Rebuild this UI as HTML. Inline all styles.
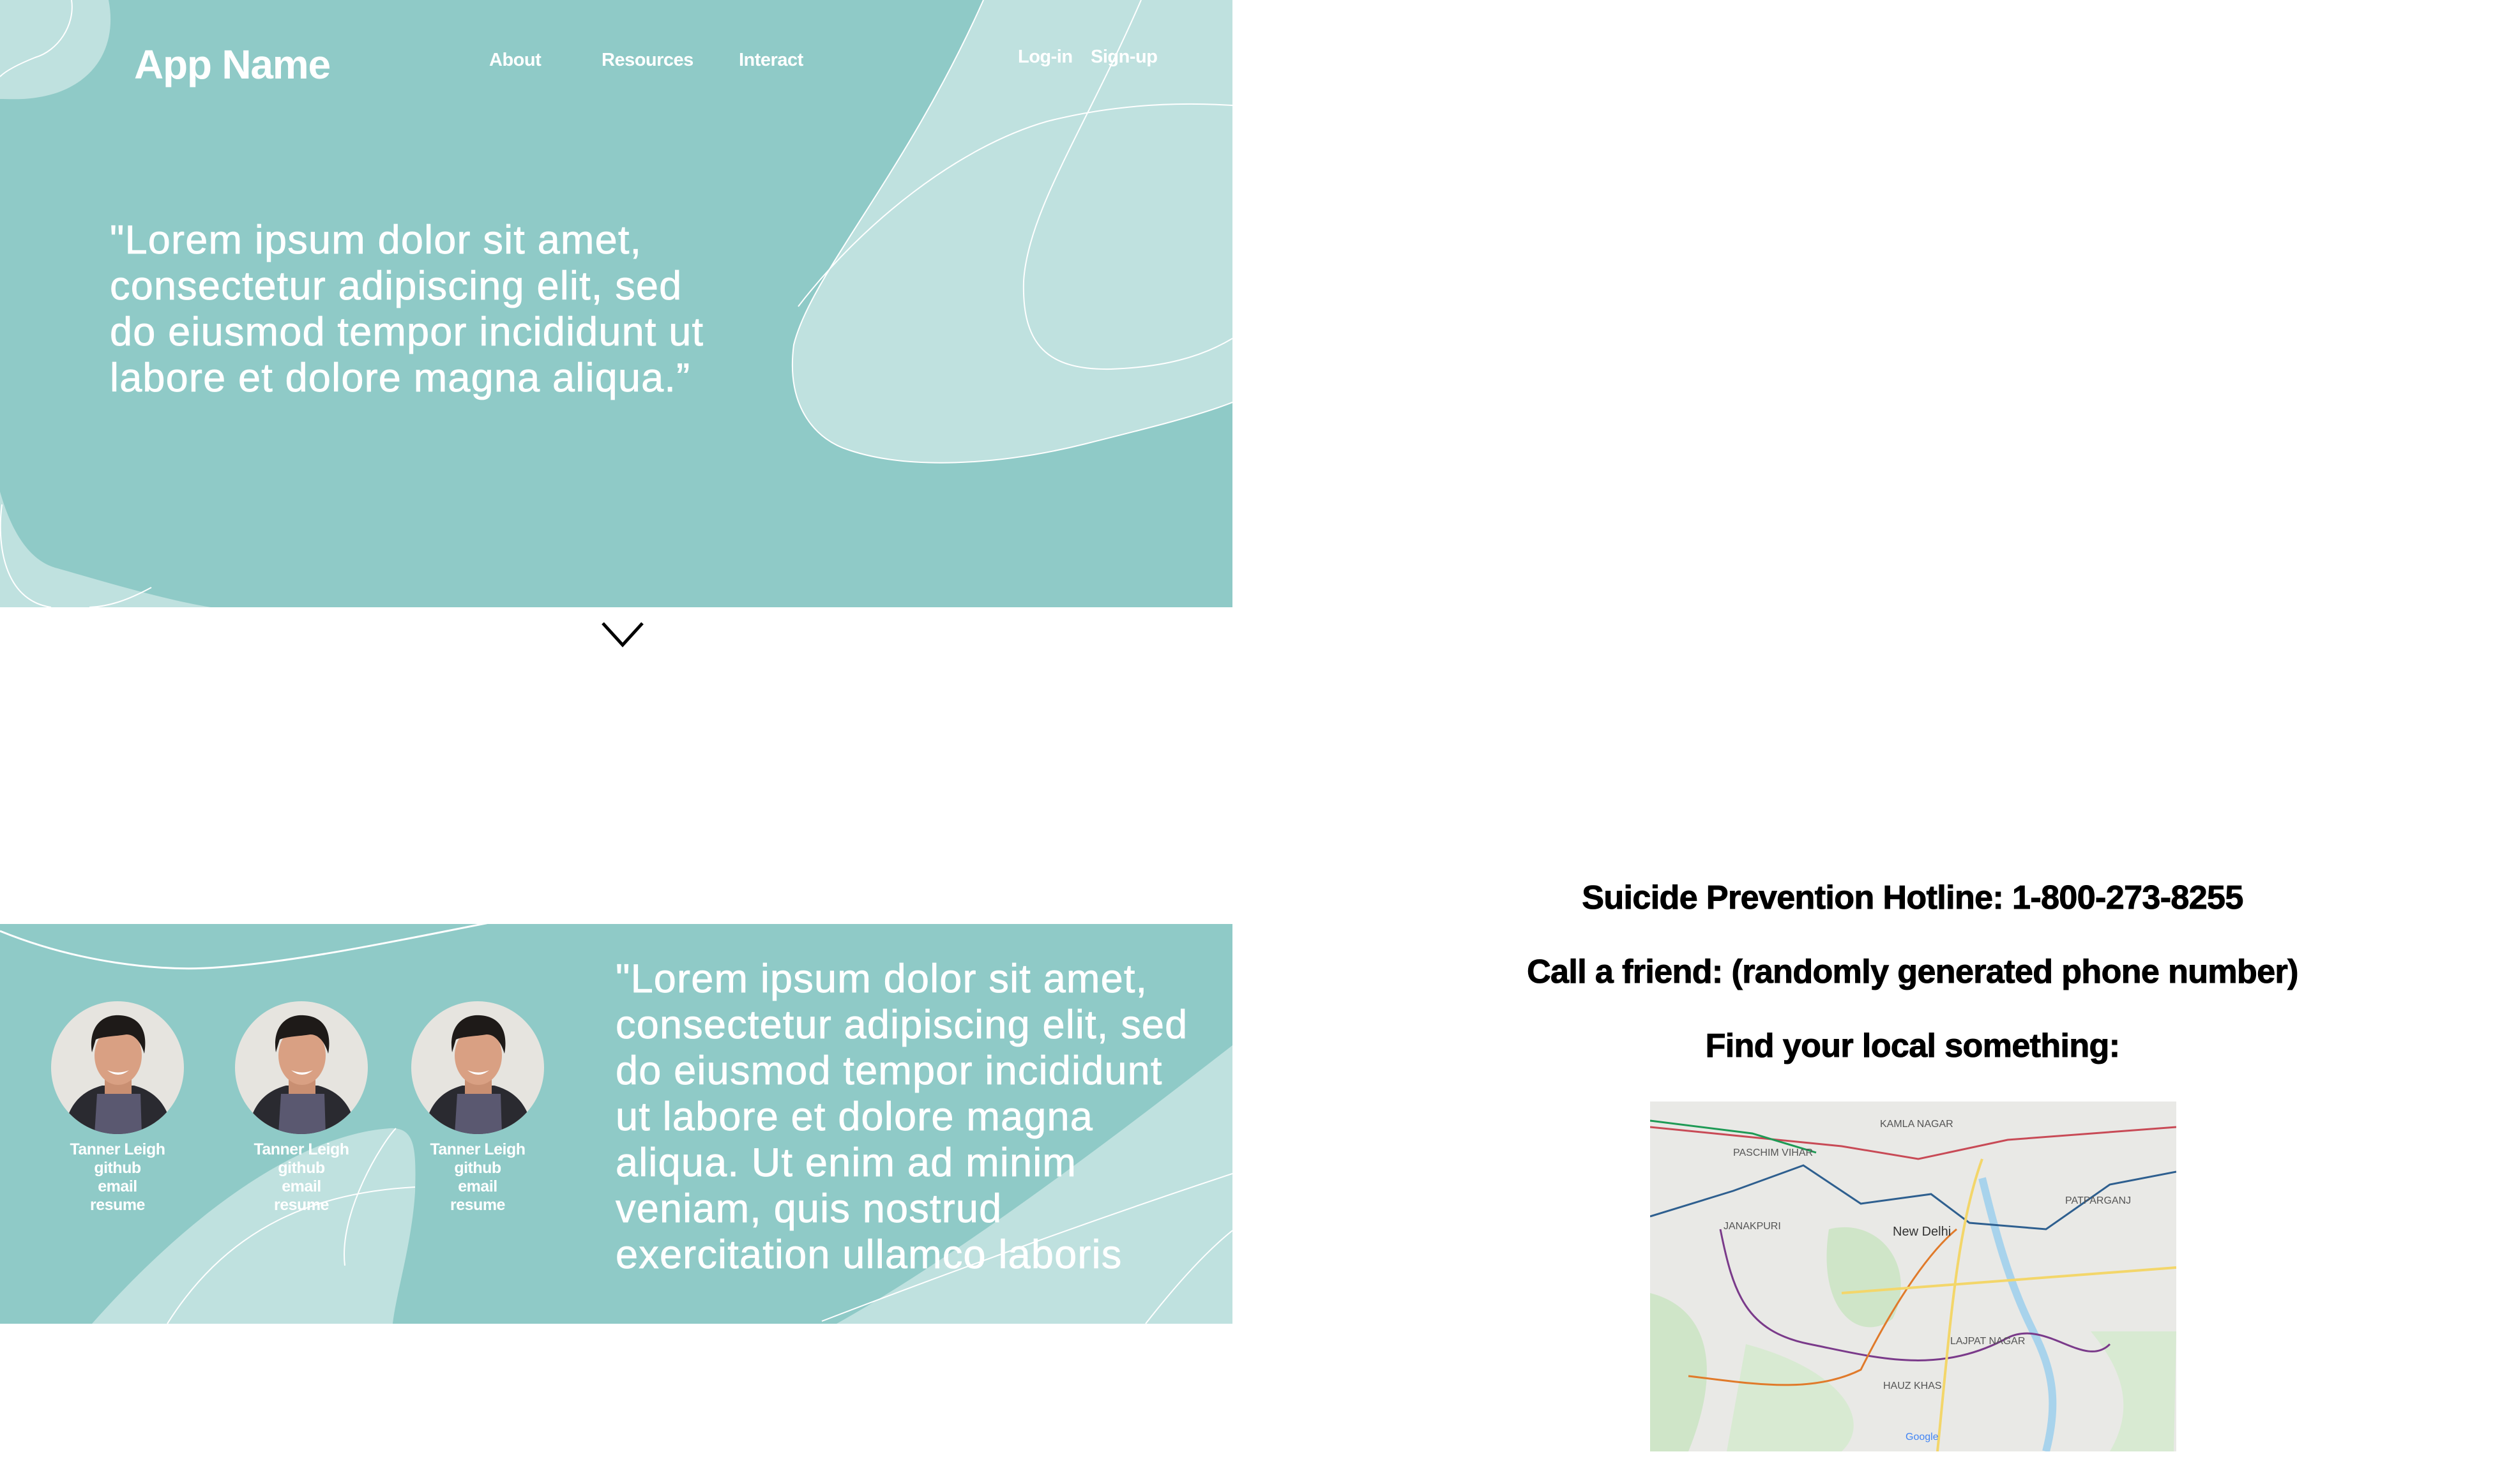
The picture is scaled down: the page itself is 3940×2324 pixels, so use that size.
<!DOCTYPE html>
<html><head><meta charset="utf-8"><style>
*{margin:0;padding:0;box-sizing:border-box}
body{width:3940px;height:2324px;background:#fff;position:relative;overflow:hidden;font-family:"Liberation Sans",sans-serif}
.abs{position:absolute}
.w{color:#fff}
.nav{font-size:29px;font-weight:700;color:#fff;position:absolute;top:78px;letter-spacing:-0.5px}
.q{font-size:63px;line-height:72px;color:#fff;letter-spacing:1.2px;white-space:nowrap;-webkit-text-stroke:0.8px #fff}
.card{position:absolute;width:240px;text-align:center;color:#fff;font-size:25px;line-height:29px;font-weight:700;letter-spacing:-0.5px}
.h{position:absolute;left:2150px;width:1690px;text-align:center;font-weight:700;font-size:52px;letter-spacing:-0.6px;color:#000;white-space:nowrap;-webkit-text-stroke:1px #000}
</style></head><body>

<div class="abs" style="left:0;top:0;width:1930px;height:951px;background:#8fcac7;overflow:hidden">
<svg width="1930" height="951" viewBox="0 0 1930 951" style="position:absolute;left:0;top:0">
<path d="M1540 0 C1420 270 1270 430 1243 540 C1230 640 1280 690 1330 705 C1420 735 1560 730 1700 695 C1800 670 1880 650 1930 630 L1930 0 Z" fill="#bfe1df"/>
<path d="M1540 0 C1420 270 1270 430 1243 540 C1230 640 1280 690 1330 705 C1420 735 1560 730 1700 695 C1800 670 1880 650 1930 630" fill="none" stroke="#fff" stroke-width="2"/>
<path d="M1787 0 C1700 200 1610 330 1603 440 C1600 540 1640 580 1740 578 C1820 575 1880 560 1930 530" fill="none" stroke="#fff" stroke-width="2"/>
<path d="M1250 480 C1350 350 1500 230 1640 190 C1750 162 1850 160 1930 165" fill="none" stroke="#fff" stroke-width="2"/>
<path d="M0 0 L170 0 C182 60 160 120 90 145 C50 158 20 155 0 155 Z" fill="#bfe1df"/>
<path d="M112 0 C118 40 90 80 55 90 C30 100 10 110 0 120" fill="none" stroke="#fff" stroke-width="2"/>
<path d="M0 770 C20 840 50 880 90 890 C160 910 260 940 330 951 L0 951 Z" fill="#bfe1df"/>
<path d="M3 790 C-5 850 5 940 80 951" fill="none" stroke="#fff" stroke-width="2"/>
<path d="M237 920 C200 940 170 950 140 951" fill="none" stroke="#fff" stroke-width="2"/>
</svg>
<div class="abs w" style="left:210px;top:64px;font-size:64px;font-weight:700;letter-spacing:-1.2px">App Name</div>
<div class="nav" style="left:766px">About</div>
<div class="nav" style="left:942px">Resources</div>
<div class="nav" style="left:1157px">Interact</div>
<div class="nav" style="left:1594px;top:73px">Log-in</div>
<div class="nav" style="left:1708px;top:73px">Sign-up</div>
<div class="abs q" style="left:172px;top:340px">"Lorem ipsum dolor sit amet,<br>consectetur adipiscing elit, sed<br>do eiusmod tempor incididunt ut<br>labore et dolore magna aliqua.”</div>
</div>

<svg class="abs" style="left:940px;top:972px" width="70" height="45" viewBox="0 0 70 45"><path d="M4 4 L35 38 L66 4" fill="none" stroke="#000" stroke-width="5"/></svg>

<div class="abs" style="left:0;top:1447px;width:1930px;height:626px;background:#8fcac7;overflow:hidden">
<svg width="1930" height="626" viewBox="0 0 1930 626" style="position:absolute;left:0;top:0">
<path d="M144 626 C300 450 470 330 610 320 C650 318 652 350 650 420 C645 500 620 580 615 626 Z" fill="#bfe1df"/>
<path d="M262 626 C360 470 500 420 650 412" fill="none" stroke="#fff" stroke-width="2"/>
<path d="M540 535 C530 450 600 340 620 320" fill="none" stroke="#fff" stroke-width="2"/>
<path d="M1310 626 C1500 520 1750 330 1930 190 L1930 626 Z" fill="#bfe1df"/>
<path d="M1287 622 C1500 540 1750 450 1930 391" fill="none" stroke="#fff" stroke-width="2"/>
<path d="M1794 626 C1830 580 1880 520 1930 480" fill="none" stroke="#fff" stroke-width="2"/>
<path d="M0 11 C120 60 250 75 340 68 C480 58 650 20 787 -6" fill="none" stroke="#fff" stroke-width="3"/>
</svg>
<div class="abs q" style="left:964px;top:50px">"Lorem ipsum dolor sit amet,<br>consectetur adipiscing elit, sed<br>do eiusmod tempor incididunt<br>ut labore et dolore magna<br>aliqua. Ut enim ad minim<br>veniam, quis nostrud<br>exercitation ullamco laboris</div>
</div>

<svg class="abs" style="left:0;top:1568px" width="900" height="212" viewBox="0 0 900 212">
<defs>
<clipPath id="c1"><circle cx="104" cy="104" r="104"/></clipPath>
<g id="av"><g clip-path="url(#c1)">
<rect width="208" height="208" fill="#e6e4df"/>
<path d="M20 208 C25 160 50 140 80 132 L130 132 C160 140 185 160 190 208 Z" fill="#2a2a30"/>
<path d="M68 208 L72 145 L140 145 L142 208 Z" fill="#5a5870"/>
<rect x="84" y="105" width="42" height="40" fill="#c98f72"/>
<ellipse cx="105" cy="85" rx="37" ry="46" fill="#d9a083"/>
<path d="M64 80 C58 40 80 20 108 22 C140 24 152 48 146 82 C140 62 130 52 118 52 C100 55 80 55 70 60 Z" fill="#1e1a18"/>
<path d="M88 108 Q105 122 122 108 Q105 115 88 108Z" fill="#fff"/>
</g></g>
</defs>
<use href="#av" x="80" y="0"/>
<use href="#av" x="368" y="0"/>
<use href="#av" x="644" y="0"/>
</svg>
<div class="card" style="left:64px;top:1786px">Tanner Leigh<br>github<br>email<br>resume</div>
<div class="card" style="left:352px;top:1786px">Tanner Leigh<br>github<br>email<br>resume</div>
<div class="card" style="left:628px;top:1786px">Tanner Leigh<br>github<br>email<br>resume</div>

<div class="h" style="top:1376px">Suicide Prevention Hotline: 1-800-273-8255</div>
<div class="h" style="top:1492px">Call a friend: (randomly generated phone number)</div>
<div class="h" style="top:1608px">Find your local something:</div>

<svg class="abs" style="left:2584px;top:1725px" width="824" height="548" viewBox="0 0 824 548">
<rect width="824" height="548" fill="#e9e9e6"/>
<path d="M0 300 C80 320 120 400 60 548 L0 548Z" fill="#cfe5c8"/>
<path d="M150 380 C300 420 350 500 300 548 L120 548Z" fill="#d8ead2"/>
<path d="M280 200 C360 180 420 260 380 340 C330 380 260 330 280 200Z" fill="#cfe5c8"/>
<path d="M690 360 C740 420 760 480 720 548 L820 548 L824 360Z" fill="#d8ead2"/>
<path d="M520 120 C540 200 560 280 600 360 C630 420 640 470 620 548" fill="none" stroke="#a8d3ec" stroke-width="12"/>
<path d="M0 40 L300 70 L420 90 L560 60 L824 40" fill="none" stroke="#c84a56" stroke-width="3"/>
<path d="M0 30 L160 50 L260 80" fill="none" stroke="#1e9a55" stroke-width="3"/>
<path d="M0 180 L130 140 L240 100 L330 160 L440 145 L500 190 L620 200 L720 130 L824 110" fill="none" stroke="#2e5f8f" stroke-width="3"/>
<path d="M110 200 C130 300 150 360 250 380 C350 400 450 430 560 370 C620 340 680 420 720 380" fill="none" stroke="#7a3a8a" stroke-width="3"/>
<path d="M60 430 C150 440 250 460 330 420 C360 360 420 250 480 200" fill="none" stroke="#e07a2a" stroke-width="3"/>
<path d="M520 90 C480 200 470 350 450 548" fill="none" stroke="#f3d66a" stroke-width="4"/>
<path d="M300 300 L824 260" fill="none" stroke="#f3d66a" stroke-width="4"/>
<text x="130" y="85" font-size="16" font-family="Liberation Sans" fill="#555">PASCHIM VIHAR</text>
<text x="360" y="40" font-size="16" font-family="Liberation Sans" fill="#555">KAMLA NAGAR</text>
<text x="380" y="210" font-size="20" font-family="Liberation Sans" fill="#333">New Delhi</text>
<text x="115" y="200" font-size="16" font-family="Liberation Sans" fill="#555">JANAKPURI</text>
<text x="470" y="380" font-size="16" font-family="Liberation Sans" fill="#555">LAJPAT NAGAR</text>
<text x="650" y="160" font-size="16" font-family="Liberation Sans" fill="#555">PATPARGANJ</text>
<text x="365" y="450" font-size="16" font-family="Liberation Sans" fill="#555">HAUZ KHAS</text>
<text x="400" y="530" font-size="16" font-family="Liberation Sans" fill="#4285f4">Google</text>
</svg>
</body></html>
